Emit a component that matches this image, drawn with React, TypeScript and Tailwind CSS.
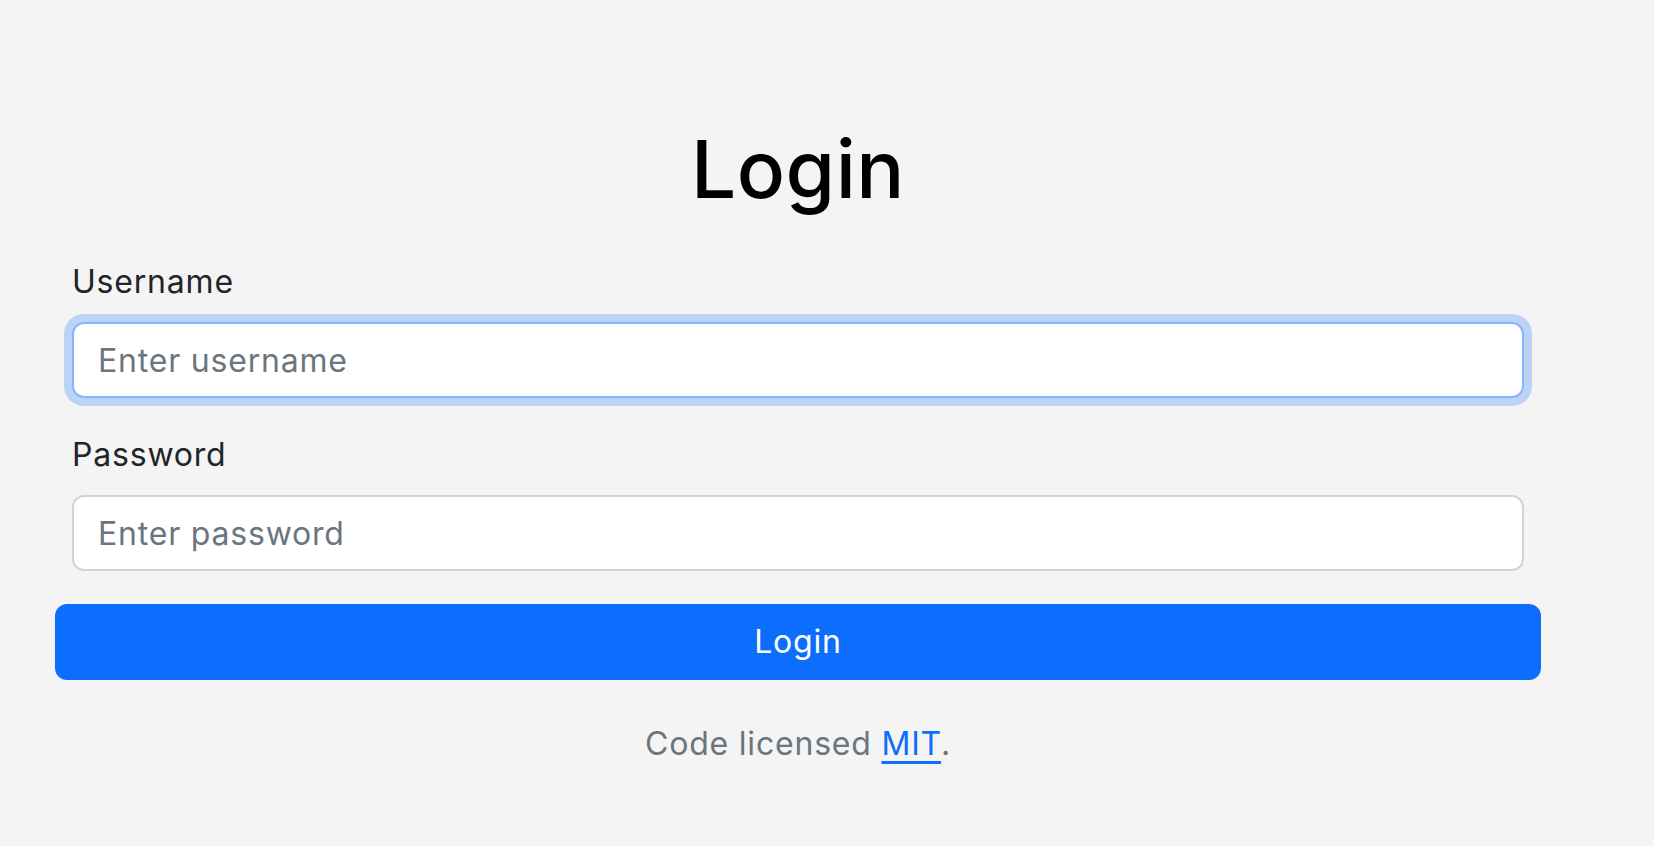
import React from 'react';

const App: React.FC = () => {
  return (
    <div
      className="min-h-screen w-full bg-[#f4f4f4] text-[#212529]"
      style={{ fontFamily: 'Inter, "Noto Sans", sans-serif' }}
    >
      <main className="w-[1486px] ml-[55px] pt-[129px] flex flex-col">
        {/* Heading */}
        <h1 className="text-center text-[80px] leading-[80px] font-medium tracking-[0.5px] text-black mb-[49px]">
          Login
        </h1>

        {/* Form fields */}
        <form className="flex flex-col" onSubmit={(e) => e.preventDefault()}>
          <div className="px-[17px] mb-[33px]">
            <label className="block text-[32px] leading-[48px] tracking-[0.8px] mb-[16px]" htmlFor="username">
              Username
            </label>
            <input
              id="username"
              type="text"
              placeholder="Enter username"
              className="block w-full h-[76px] px-[24px] text-[32px] tracking-[0.8px] bg-white border-2 border-[#86b7fe] rounded-[12px] shadow-[0_0_0_8px_rgba(13,110,253,0.25)] outline-none placeholder:text-[#6c757d]"
            />
          </div>

          <div className="px-[17px] mb-[33px]">
            <label className="block text-[32px] leading-[48px] tracking-[0.8px] mb-[16px]" htmlFor="password">
              Password
            </label>
            <input
              id="password"
              type="password"
              placeholder="Enter password"
              className="block w-full h-[76px] px-[24px] text-[32px] tracking-[0.8px] bg-white border-2 border-[#ced4da] rounded-[12px] outline-none placeholder:text-[#6c757d]"
            />
          </div>

          <button
            type="submit"
            className="w-full h-[76px] rounded-[12px] bg-[#0d6efd] text-white text-[32px] leading-[48px] tracking-[0.8px]"
          >
            Login
          </button>
        </form>

        <p className="mt-[40px] text-center text-[32px] leading-[48px] tracking-[0.8px] text-[#6c757d]">
          Code licensed{' '}
          <a href="#" className="text-[#0d6efd] underline underline-offset-[6px]">
            MIT
          </a>
          .
        </p>
      </main>
    </div>
  );
};

export default App;
